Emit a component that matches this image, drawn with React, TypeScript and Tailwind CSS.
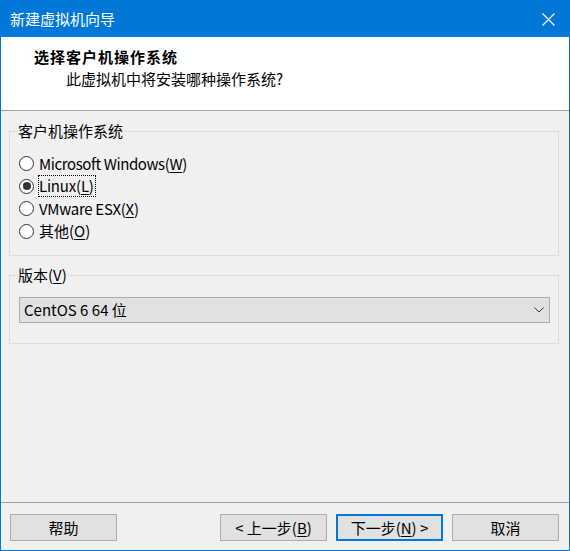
import React from "react";

function Radio({ checked }: { checked?: boolean }) {
  return (
    <span className="w-[15px] h-[15px] rounded-full border border-[#333333] bg-white flex items-center justify-center shrink-0">
      {checked && <span className="w-[8px] h-[8px] rounded-full bg-[#333333]" />}
    </span>
  );
}

function Btn({ children, primary }: { children: React.ReactNode; primary?: boolean }) {
  return (
    <div
      className={
        primary
          ? "w-[107px] h-[27px] border-2 border-[#0078d7] bg-[#e1e1e1] flex items-center justify-center text-[15px] leading-[20px]"
          : "w-[107px] h-[27px] border border-[#adadad] bg-[#e1e1e1] flex items-center justify-center text-[15px] leading-[20px]"
      }
    >
      {children}
    </div>
  );
}

export default function App() {
  return (
    <div className="w-[570px] h-[551px] border border-[#0078d7] flex flex-col font-['Noto_Sans_CJK_SC','Noto_Sans',sans-serif] text-black bg-[#f0f0f0] overflow-hidden">
      {/* title bar */}
      <div className="h-[36px] bg-[#0078d7] flex items-center pl-[9px] pr-[14px] shrink-0">
        <div className="flex-1 text-white text-[15px] leading-[20px]">新建虚拟机向导</div>
        <svg width="13" height="13" viewBox="0 0 13 13" className="mt-[1px]">
          <path d="M0.5 0.5 L12.5 12.5 M12.5 0.5 L0.5 12.5" stroke="white" strokeWidth="1.1" fill="none" />
        </svg>
      </div>
      {/* header */}
      <div className="h-[73px] bg-white pt-[9px] pl-[33px] shrink-0">
        <div className="text-[15px] leading-[22px] font-bold tracking-[1px]">选择客户机操作系统</div>
        <div className="text-[15px] leading-[22px] pl-[32px]">此虚拟机中将安装哪种操作系统?</div>
      </div>
      <div className="h-px bg-[#a0a0a0] shrink-0" />
      {/* body */}
      <div className="flex-1 pt-[10px] pl-[8px] pr-[10px] flex flex-col">
        <fieldset className="h-[135px] border border-[#dcdcdc] pl-[6px] pr-[6px] m-0">
          <legend className="px-[2px] text-[15px] leading-[20px]">客户机操作系统</legend>
          <div className="mt-[11px] flex flex-col text-[15px]">
            <div className="h-[23px] flex items-center pl-[3px]">
              <Radio />
              <span className="ml-[4px] border border-transparent pr-[1px] leading-[20px] tracking-[-0.4px]">
                Microsoft Windows(<span className="underline underline-offset-2">W</span>)
              </span>
            </div>
            <div className="h-[22px] flex items-center pl-[3px]">
              <Radio checked />
              <span className="ml-[4px] border border-dotted border-black pr-[1px] leading-[20px] tracking-[-0.2px]">
                Linux(<span className="underline underline-offset-2">L</span>)
              </span>
            </div>
            <div className="h-[23px] flex items-center pl-[3px]">
              <Radio />
              <span className="ml-[4px] border border-transparent pr-[1px] leading-[20px] tracking-[-0.3px]">
                VMware ESX(<span className="underline underline-offset-2">X</span>)
              </span>
            </div>
            <div className="h-[22px] flex items-center pl-[3px]">
              <Radio />
              <span className="ml-[4px] border border-transparent pr-[1px] leading-[20px]">
                其他(<span className="underline underline-offset-2">O</span>)
              </span>
            </div>
          </div>
        </fieldset>
        <fieldset className="mt-[9px] h-[79px] border border-[#dcdcdc] pl-[6px] pr-[6px] m-0">
          <legend className="px-[2px] text-[15px] leading-[20px]">
            版本(<span className="underline underline-offset-2">V</span>)
          </legend>
          <div className="mt-[12px] ml-[3px] mr-[2px] h-[26px] border border-[#adadad] bg-[#e1e1e1] flex items-center pl-[4px] pr-[5px]">
            <span className="flex-1 text-[15px] leading-[20px]">CentOS 6 64 位</span>
            <svg width="10" height="6" viewBox="0 0 10 6">
              <path d="M0.5 0.5 L5 5 L9.5 0.5" stroke="#333333" strokeWidth="1" fill="none" />
            </svg>
          </div>
        </fieldset>
      </div>
      <div className="h-px bg-[#a0a0a0] shrink-0" />
      {/* footer */}
      <div className="h-[47px] pt-[11px] pl-[9px] pr-[10px] flex shrink-0">
        <Btn>帮助</Btn>
        <div className="flex-1" />
        <div className="flex gap-[9px]">
          <Btn>
            &lt; 上一步(<span className="underline underline-offset-2">B</span>)
          </Btn>
          <Btn primary>
            下一步(<span className="underline underline-offset-2">N</span>) &gt;
          </Btn>
          <Btn>取消</Btn>
        </div>
      </div>
    </div>
  );
}
